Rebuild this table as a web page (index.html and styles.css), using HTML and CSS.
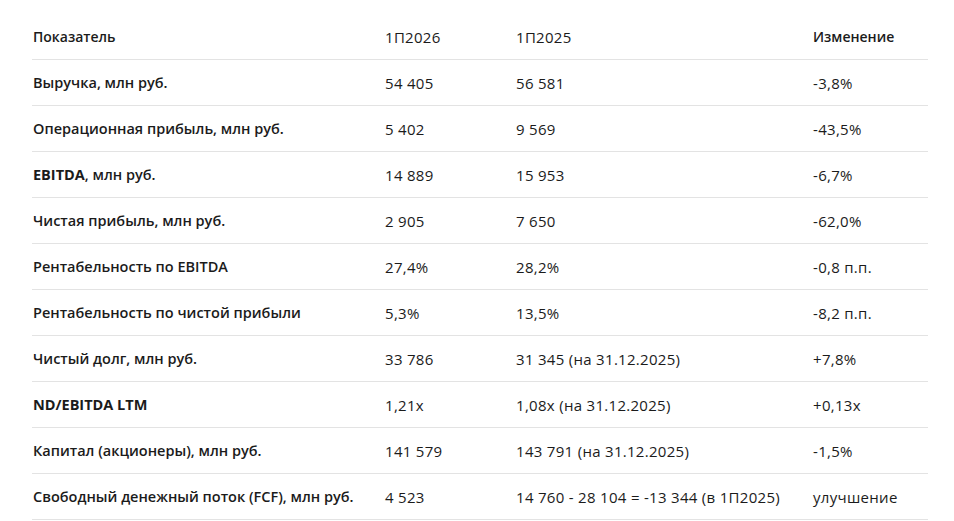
FILE: index.html
```html
<!DOCTYPE html>
<html lang="ru">
<head>
<meta charset="utf-8">
<link rel="stylesheet" href="styles.css">
</head>
<body>
<table class="fin">
  <colgroup>
    <col class="c1"><col class="c2"><col class="c3"><col class="c4">
  </colgroup>
  <thead>
    <tr><th>Показатель</th><th class="num">1П2026</th><th class="num">1П2025</th><th>Изменение</th></tr>
  </thead>
  <tbody>
    <tr><td class="lbl">Выручка, млн руб.</td><td>54 405</td><td>56 581</td><td>-3,8%</td></tr>
    <tr><td class="lbl">Операционная прибыль, млн руб.</td><td>5 402</td><td>9 569</td><td>-43,5%</td></tr>
    <tr><td class="lbl"><b>EBITDA</b>, млн руб.</td><td>14 889</td><td>15 953</td><td>-6,7%</td></tr>
    <tr><td class="lbl">Чистая прибыль, млн руб.</td><td>2 905</td><td>7 650</td><td>-62,0%</td></tr>
    <tr><td class="lbl">Рентабельность по EBITDA</td><td>27,4%</td><td>28,2%</td><td>-0,8 п.п.</td></tr>
    <tr><td class="lbl">Рентабельность по чистой прибыли</td><td>5,3%</td><td>13,5%</td><td>-8,2 п.п.</td></tr>
    <tr><td class="lbl">Чистый долг, млн руб.</td><td>33 786</td><td>31 345 (на 31.12.2025)</td><td>+7,8%</td></tr>
    <tr><td class="lbl strong">ND/EBITDA LTM</td><td>1,21x</td><td>1,08x (на 31.12.2025)</td><td>+0,13x</td></tr>
    <tr><td class="lbl">Капитал (акционеры), млн руб.</td><td>141 579</td><td>143 791 (на 31.12.2025)</td><td>-1,5%</td></tr>
    <tr><td class="lbl">Свободный денежный поток (FCF), млн руб.</td><td>4 523</td><td>14 760 - 28 104 = -13 344 (в 1П2025)</td><td>улучшение</td></tr>
  </tbody>
</table>
</body>
</html>
```
FILE: styles.css
```css
html, body {
  margin: 0;
  padding: 0;
  background: #ffffff;
}
body {
  font-family: "Open Sans", "Noto Sans", sans-serif;
  font-size: 15px;
  color: #1b1b1b;
  padding: 14px 0 0 32px;
}
.fin {
  border-collapse: collapse;
  table-layout: fixed;
  width: 896px;
}
.c1 { width: 352px; }
.c2 { width: 131px; }
.c3 { width: 297px; }
.c4 { width: 116px; }
.fin th, .fin td {
  height: 45px;
  padding: 0 0 0 1px;
  text-align: left;
  vertical-align: middle;
  border-bottom: 1px solid #e3e3e3;
  white-space: nowrap;
  letter-spacing: 0.3px;
}
.fin th {
  font-weight: 600;
  font-size: 14px;
  letter-spacing: 0;
}
.fin th.num {
  font-weight: 400;
  font-size: 15px;
  letter-spacing: 0.3px;
}
.fin td {
  font-weight: 400;
}
.fin td.lbl {
  font-weight: 600;
  font-size: 14.5px;
  letter-spacing: 0;
}
.fin td.lbl b {
  font-weight: 700;
}
.fin td.strong {
  font-weight: 700;
}
```
